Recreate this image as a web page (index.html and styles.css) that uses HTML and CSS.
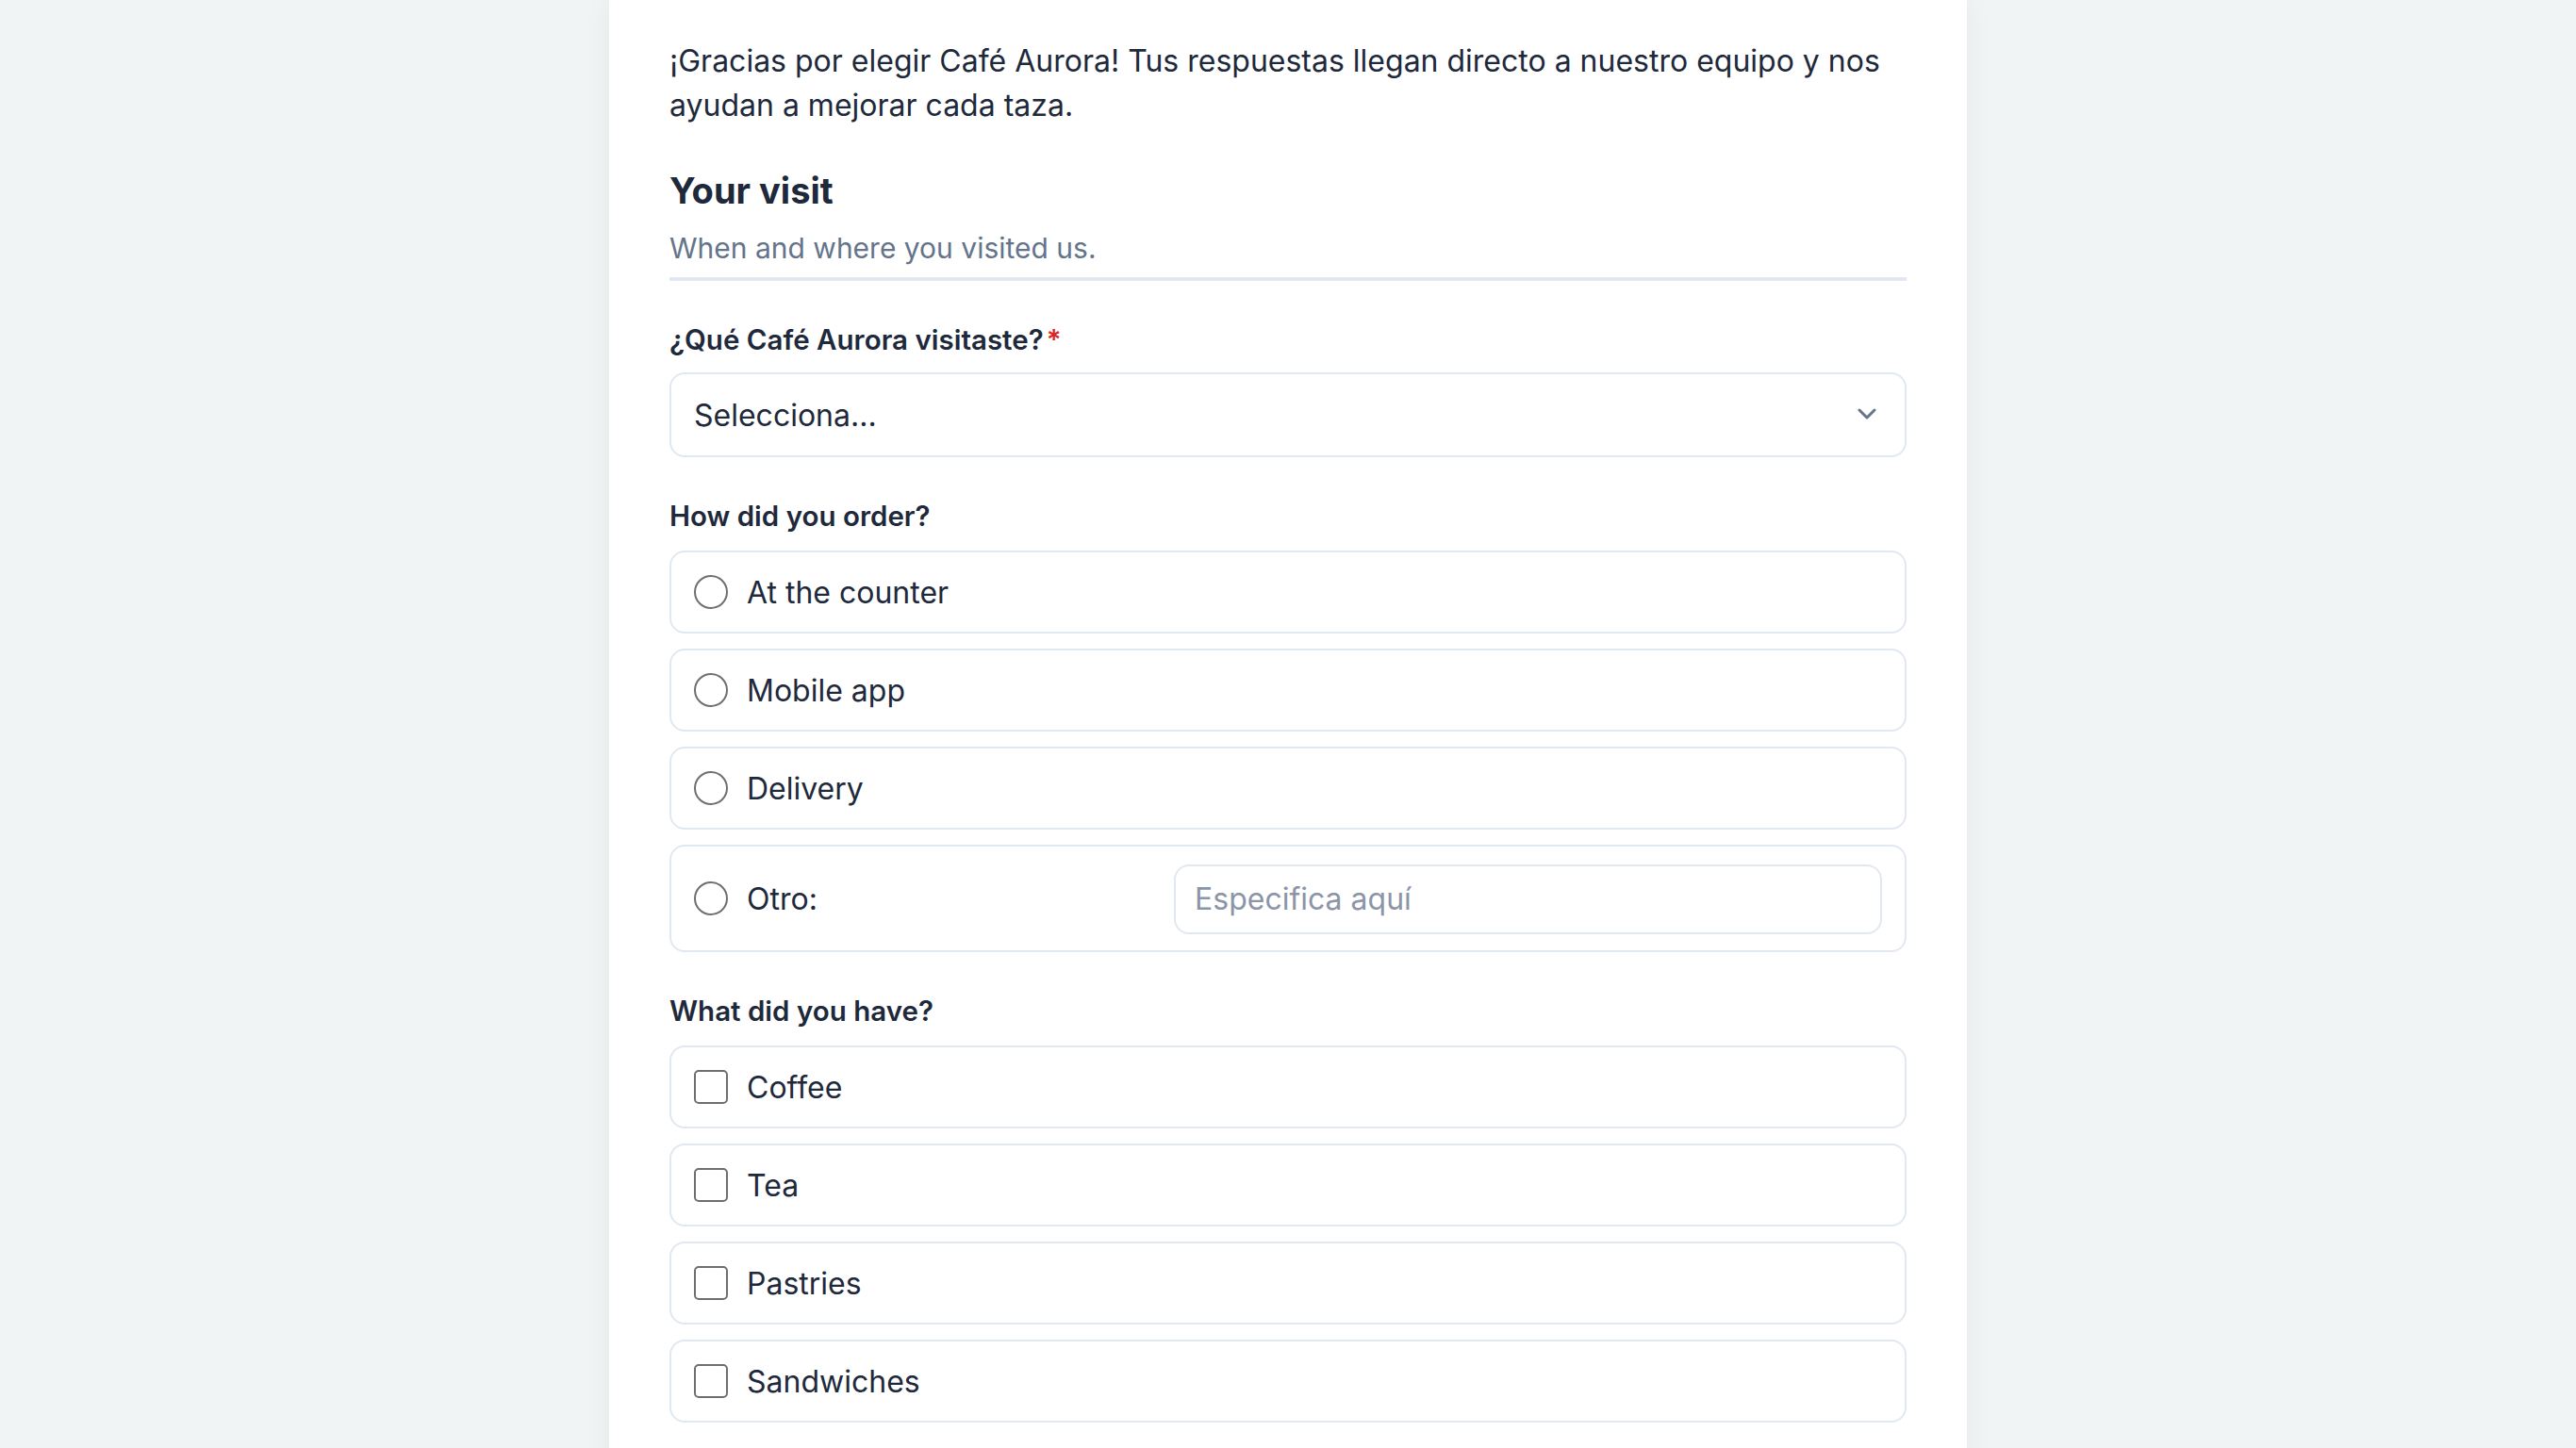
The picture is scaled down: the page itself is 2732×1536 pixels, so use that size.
FILE: index.html
```html
<!DOCTYPE html>
<html lang="es">
<head>
    <meta charset="UTF-8">
    <meta name="viewport" content="width=device-width, initial-scale=1.0">
    <title>Café Aurora · Encuesta</title>
    <link rel="stylesheet" href="styles.css">
</head>
<body>
    <main class="survey">
        <p class="intro">¡Gracias por elegir Café Aurora! Tus respuestas llegan directo a nuestro equipo y nos ayudan a mejorar cada taza.</p>

        <section class="section">
            <header class="section-head">
                <h2>Your visit</h2>
                <p>When and where you visited us.</p>
            </header>

            <div class="field">
                <label class="field-label" for="location">¿Qué Café Aurora visitaste?<span class="req">*</span></label>
                <div class="select-wrap">
                    <select id="location">
                        <option>Selecciona...</option>
                        <option>Centro</option>
                        <option>Malecón</option>
                        <option>Aeropuerto</option>
                    </select>
                    <svg class="chevron" viewBox="0 0 20 12" aria-hidden="true">
                        <path d="M2 2 L10 10 L18 2" />
                    </svg>
                </div>
            </div>

            <div class="field" role="radiogroup" aria-labelledby="orderLabel">
                <div class="field-label" id="orderLabel">How did you order?</div>
                <div class="options">
                    <label class="option"><input type="radio" name="order"><span>At the counter</span></label>
                    <label class="option"><input type="radio" name="order"><span>Mobile app</span></label>
                    <label class="option"><input type="radio" name="order"><span>Delivery</span></label>
                    <label class="option">
                        <input type="radio" name="order"><span>Otro:</span>
                        <input type="text" class="other-input" placeholder="Especifica aquí">
                    </label>
                </div>
            </div>

            <div class="field" role="group" aria-labelledby="haveLabel">
                <div class="field-label" id="haveLabel">What did you have?</div>
                <div class="options">
                    <label class="option"><input type="checkbox"><span>Coffee</span></label>
                    <label class="option"><input type="checkbox"><span>Tea</span></label>
                    <label class="option"><input type="checkbox"><span>Pastries</span></label>
                    <label class="option"><input type="checkbox"><span>Sandwiches</span></label>
                </div>
            </div>
        </section>
    </main>
</body>
</html>
```

FILE: styles.css
```css
* {
    margin: 0;
    padding: 0;
    box-sizing: border-box;
}

body {
    font-family: Inter, "Noto Sans", sans-serif;
    color: #1e293b;
    background: #f1f4f4;
    min-height: 100vh;
}

/* 卡片 */
.survey {
    width: 1440px;
    min-height: 100vh;
    margin: 0 auto;
    padding: 41px 64px 64px;
    background: #fff;
    box-shadow: 0 0 28px rgba(15, 23, 42, 0.05);
}

.intro {
    font-size: 32px;
    line-height: 47px;
}

/* 分组标题 */
.section-head {
    margin-top: 43px;
    padding-bottom: 9px;
    border-bottom: 4px solid #e2e8f0;
}

.section-head h2 {
    font-size: 38px;
    line-height: 48px;
    font-weight: 700;
    color: #1e293b;
}

.section-head p {
    margin-top: 15px;
    font-size: 30px;
    line-height: 44px;
    color: #64748b;
}

.field {
    margin-top: 42px;
}

.field-label {
    display: block;
    font-size: 29.5px;
    line-height: 40px;
    font-weight: 600;
    margin-bottom: 17px;
}

label.field-label {
    margin-bottom: 15px;
}

.req {
    color: #dc2626;
    margin-left: 3px;
}

/* 下拉框 */
.select-wrap {
    position: relative;
}

select {
    width: 100%;
    appearance: none;
    font-family: inherit;
    font-size: 32px;
    line-height: 48px;
    color: #1e293b;
    background: #fff;
    border: 2px solid #e2e8f0;
    border-radius: 16px;
    padding: 20px 80px 18px 24px;
}

.chevron {
    position: absolute;
    right: 32px;
    top: 38px;
    width: 20px;
    height: 12px;
    fill: none;
    stroke: #64748b;
    stroke-width: 3;
    stroke-linecap: round;
    stroke-linejoin: round;
}

/* 选项 */
.options {
    display: flex;
    flex-direction: column;
    gap: 16px;
}

.option {
    display: flex;
    align-items: center;
    gap: 20px;
    padding: 19px 24px 17px;
    border: 2px solid #e2e8f0;
    border-radius: 16px;
    font-size: 32px;
    line-height: 48px;
    cursor: pointer;
}

.option input[type="radio"],
.option input[type="checkbox"] {
    appearance: none;
    flex: none;
    width: 36px;
    height: 36px;
    margin-top: -2px;
    border: 2px solid #6f6f6f;
    background: #fff;
}

.option input[type="radio"] {
    border-radius: 50%;
}

.option input[type="checkbox"] {
    border-radius: 5px;
}

.other-input {
    width: 751px;
    margin-left: auto;
    font-family: inherit;
    font-size: 32px;
    line-height: 48px;
    color: #1e293b;
    padding: 11px 20px;
    border: 2px solid #e2e8f0;
    border-radius: 16px;
    outline: none;
}

.other-input::placeholder {
    color: #8b95a7;
}
```
